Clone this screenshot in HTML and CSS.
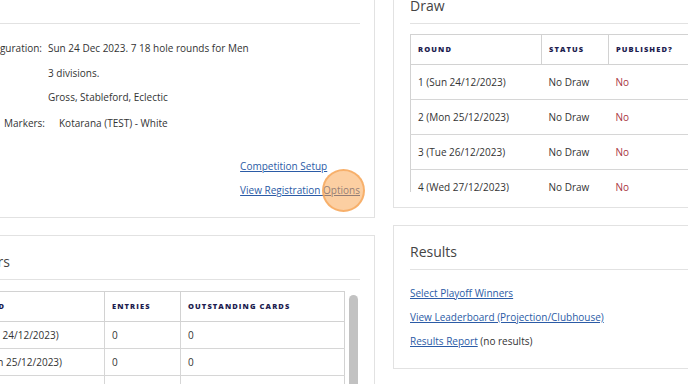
FILE: index.html
```html
<!DOCTYPE html>
<html lang="en">
<head>
<meta charset="utf-8">
<title>Competition</title>
<link rel="stylesheet" href="styles.css">
</head>
<body>
<div class="page">
  <div class="col col-left">
    <section class="panel panel-left">
      <h2 class="panel-title">Event</h2>
      <div class="details">
        <div class="detail-grid">
          <div class="label">Configuration:</div>
          <div class="value">Sun 24 Dec 2023. 7 18 hole rounds for Men</div>
          <div class="label"></div>
          <div class="value">3 divisions.</div>
          <div class="label"></div>
          <div class="value">Gross, Stableford, Eclectic</div>
        </div>
        <div class="markers-row">
          <div class="label">Markers:</div>
          <div class="value">Kotarana (TEST) - White</div>
        </div>
        <div class="action-links">
          <a href="#" class="link">Competition Setup</a>
          <a href="#" class="link">View Registration Options</a>
          <span class="cursor-ring"></span>
        </div>
      </div>
    </section>
    <section class="panel panel-left">
      <h2 class="panel-title">Players</h2>
      <div class="table-scroll">
        <table class="grid grid-cards">
          <colgroup><col class="c-round"><col class="c-entries"><col class="c-cards"></colgroup>
          <thead>
            <tr><th>Round</th><th>Entries</th><th>Outstanding Cards</th></tr>
          </thead>
          <tbody>
            <tr><td>1 (Sun 24/12/2023)</td><td>0</td><td>0</td></tr>
            <tr><td>2 (Mon 25/12/2023)</td><td>0</td><td>0</td></tr>
            <tr><td>3 (Tue 26/12/2023)</td><td>0</td><td>0</td></tr>
            <tr><td>4 (Wed 27/12/2023)</td><td>0</td><td>0</td></tr>
          </tbody>
        </table>
        <div class="scroll-track"><div class="scroll-thumb"></div></div>
      </div>
    </section>
  </div>
  <div class="col col-right">
    <section class="panel panel-right">
      <h2 class="panel-title">Draw</h2>
      <div class="draw-scroll">
        <table class="grid grid-draw">
          <colgroup><col class="d-round"><col class="d-status"><col class="d-pub"></colgroup>
          <thead>
            <tr><th>Round</th><th>Status</th><th>Published?</th></tr>
          </thead>
          <tbody>
            <tr><td>1 (Sun 24/12/2023)</td><td>No Draw</td><td class="no">No</td></tr>
            <tr><td>2 (Mon 25/12/2023)</td><td>No Draw</td><td class="no">No</td></tr>
            <tr><td>3 (Tue 26/12/2023)</td><td>No Draw</td><td class="no">No</td></tr>
            <tr><td>4 (Wed 27/12/2023)</td><td>No Draw</td><td class="no">No</td></tr>
            <tr><td>5 (Thu 28/12/2023)</td><td>No Draw</td><td class="no">No</td></tr>
            <tr><td>6 (Fri 29/12/2023)</td><td>No Draw</td><td class="no">No</td></tr>
          </tbody>
        </table>
      </div>
    </section>
    <section class="panel panel-right">
      <h2 class="panel-title">Results</h2>
      <ul class="result-links">
        <li><a href="#" class="link">Select Playoff Winners</a></li>
        <li><a href="#" class="link">View Leaderboard (Projection/Clubhouse)</a></li>
        <li><a href="#" class="link">Results Report</a> (no results)</li>
      </ul>
    </section>
  </div>
</div>
</body>
</html>
```

FILE: styles.css
```css
html, body {
  margin: 0;
  padding: 0;
}
body {
  width: 688px;
  height: 384px;
  overflow: hidden;
  background: #ffffff;
  font-family: "Open Sans", "Noto Sans", sans-serif;
  font-size: 10px;
  color: #333333;
}

.page {
  display: flex;
  align-items: flex-start;
  gap: 18px;
  margin-left: -53px;
  margin-top: -21px;
}

.col {
  display: flex;
  flex-direction: column;
  gap: 17px;
  flex: none;
}
.col-left { width: 428px; }
.col-right { width: 400px; }

.panel {
  background: #ffffff;
  border: 1px solid #e2e2e2;
  box-sizing: border-box;
}
.panel-left { padding: 16px 14px 15px 15px; }
.panel-right { padding: 16px 16px 15px 16px; }

.panel-title {
  margin: 0;
  font-size: 14px;
  font-weight: 400;
  line-height: 20px;
  color: #444444;
  padding-bottom: 7px;
  border-bottom: 1px solid #e2e2e2;
}

/* details */
.details {
  position: relative;
  display: flex;
  flex-direction: column;
  padding-top: 12px;
}
.detail-grid {
  display: grid;
  grid-template-columns: 79px 1fr;
  column-gap: 6px;
  line-height: 24.5px;
}
.detail-grid .label { text-align: right; }
.markers-row {
  display: grid;
  grid-template-columns: 82px 1fr;
  column-gap: 14px;
  line-height: 24.5px;
  margin-top: 1px;
}
.markers-row .label { text-align: right; }

.action-links {
  position: relative;
  align-self: flex-end;
  display: flex;
  flex-direction: column;
  margin-top: 19px;
  line-height: 24px;
}

.link {
  color: #2b5ba6;
  text-decoration: underline;
}

.cursor-ring {
  position: absolute;
  right: -5px;
  top: 15px;
  width: 39px;
  height: 39px;
  border-radius: 50%;
  background: rgba(250, 160, 70, 0.5);
  border: 2px solid rgba(245, 165, 90, 0.75);
}

/* tables */
.grid {
  border-collapse: collapse;
  table-layout: fixed;
  border: 1px solid #d2d2d2;
}
.grid th {
  text-align: left;
  font-size: 7.5px;
  font-weight: 800;
  letter-spacing: 1.1px;
  text-transform: uppercase;
  color: #1d1d4f;
  line-height: 13px;
  padding: 8px 7px;
  border: 1px solid #d2d2d2;
  white-space: nowrap;
}
.grid td {
  line-height: 14px;
  padding: 10px 7px;
  border-top: 1px solid #d6d6d6;
  border-bottom: 1px solid #d6d6d6;
  white-space: nowrap;
}
.grid-cards td { padding: 6px 7px; }
.grid-cards td + td { border-left: 1px solid #d6d6d6; }

.draw-scroll {
  margin-top: 10px;
  height: 158px;
  overflow: hidden;
}
.grid-draw { width: 366px; }
.d-round { width: 131px; }
.d-status { width: 67px; }
.d-pub { width: 168px; }
.no { color: #a8343f; }

.table-scroll {
  display: flex;
  margin-top: 11px;
  height: 120px;
  overflow: hidden;
}
.grid-cards { width: 381px; flex: none; align-self: flex-start; }
.c-round { width: 141px; }
.c-entries { width: 76px; }
.c-cards { width: 164px; }

.scroll-track {
  flex: none;
  width: 16px;
  box-sizing: border-box;
  padding: 4px 3px 0 4px;
  border-right: 1px solid #f0f0f0;
}
.scroll-thumb {
  width: 9px;
  height: 200px;
  border-radius: 5px;
  background: #c2c2c2;
}

/* results */
.result-links {
  list-style: none;
  margin: 0;
  padding: 11px 0 0 0;
  line-height: 24px;
}
```
